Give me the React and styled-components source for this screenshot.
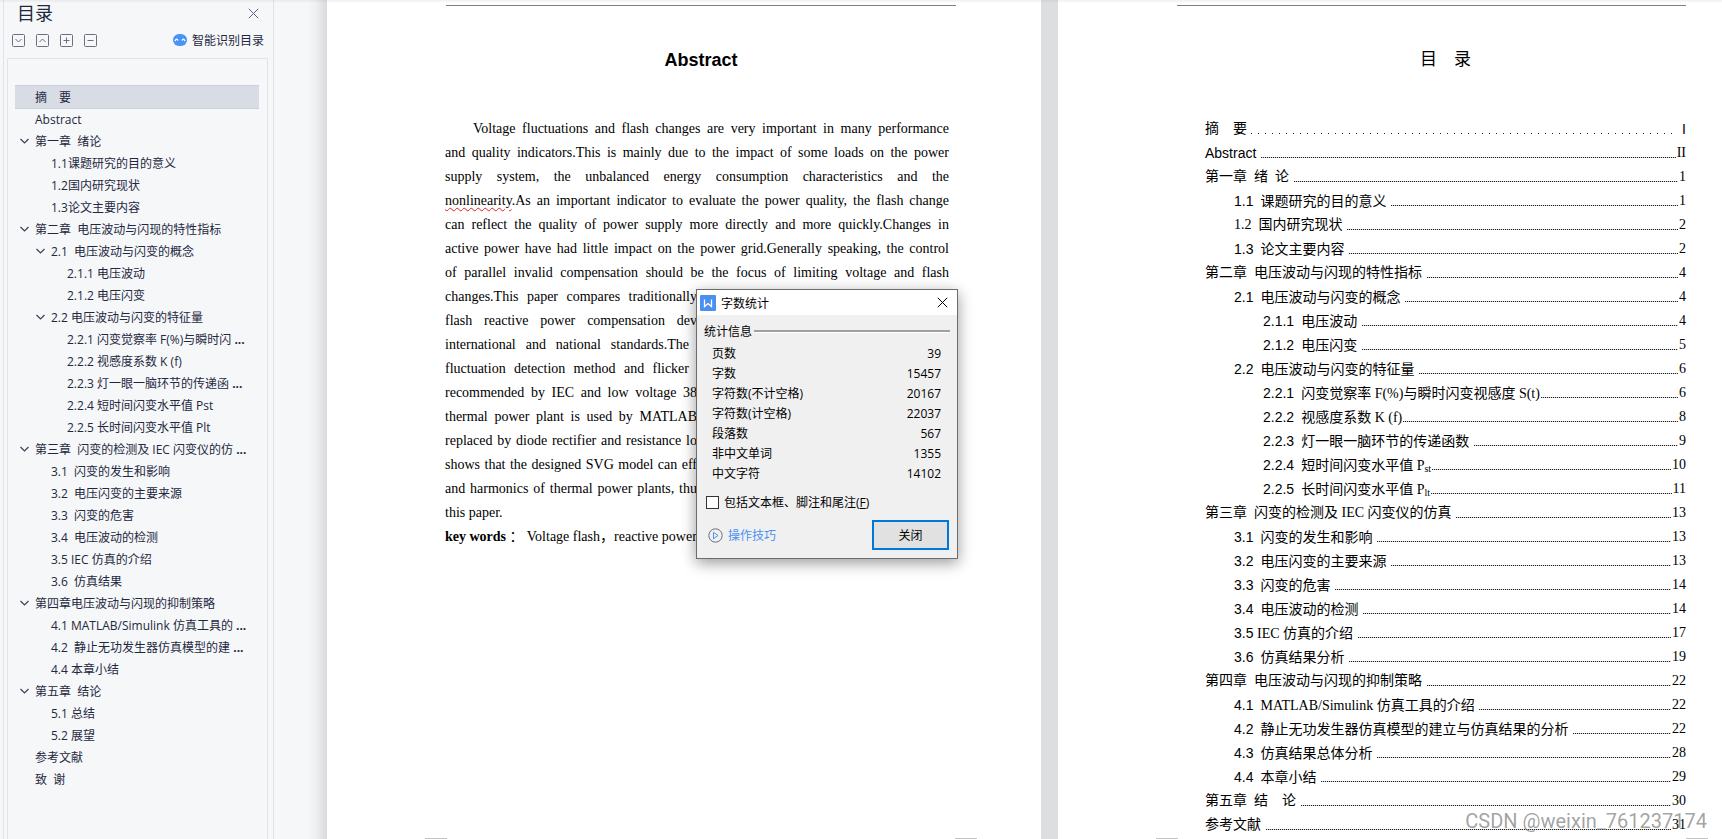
import React from "react";
import styled, { createGlobalStyle } from "styled-components";

const sans = `"Open Sans", "Noto Sans CJK SC", sans-serif`;
const serif = `"Liberation Serif", "Noto Sans CJK SC", serif`;
const arial = `"Liberation Sans", "Noto Sans CJK SC", sans-serif`;

const Global = createGlobalStyle`
  * { box-sizing: border-box; }
  body { margin: 0; background: #dcdee0; }
  button, input { font: inherit; }
`;

const Workspace = styled.div`
  display: grid;
  grid-template-columns: 274px 53px minmax(0, 731fr) minmax(0, 664fr);
  height: 100vh;
  overflow: hidden;
  background: #dcdee0;
  font-family: ${sans};
  font-size: 12px;
  color: #1f2840;
  position: relative;
  &::before {
    content: "";
    position: absolute;
    inset: 0 0 auto 0;
    height: 3px;
    background: linear-gradient(rgba(0, 0, 0, 0.06), transparent);
    z-index: 2;
  }
`;

const SidebarEdge = styled.div`
  display: flex;
  padding-left: 3px;
  background: #f5f7f9;
`;

const Sidebar = styled.aside`
  flex: 1;
  padding: 0 5px 0 3px;
  display: flex;
  flex-direction: column;
  border-left: 1px solid #e1e3e7;
  border-right: 1px solid #e1e3e7;
`;

const Gutter = styled.div`
  background: linear-gradient(90deg, #f5f7f9 34px, #eeeff1 42px, #d9dadc 53px);
`;

const PaneHeader = styled.header`
  display: flex;
  justify-content: space-between;
  align-items: center;
  height: 26px;
  padding: 0 9px 0 10px;
  color: #1f2840;
`;

const PaneTitle = styled.h1`
  margin: 0;
  font-size: 18px;
  font-weight: 400;
  line-height: 26px;
`;

const IconButton = styled.button`
  display: flex;
  padding: 0;
  border: 0;
  background: none;
  color: ${(p) => p.$color || "inherit"};
`;

const Toolbar = styled.div`
  display: flex;
  align-items: center;
  gap: 11px;
  height: 28px;
  margin-bottom: 4px;
  padding: 0 4px 0 5px;
`;

const SmartButton = styled.button`
  display: flex;
  align-items: center;
  gap: 5px;
  margin-left: auto;
  padding: 0;
  border: 0;
  background: none;
  color: #1f2840;
`;

const TreeBox = styled.nav`
  flex: 1;
  padding: 27px 8px 0 7px;
  border: 1px solid #e1e3e7;
  border-bottom: 0;
  border-radius: 2px 2px 0 0;
`;

const TreeItem = styled.a`
  display: flex;
  align-items: center;
  height: 22px;
  padding-left: ${(p) => 4 + p.$level * 16}px;
  color: #1f2840;
  text-decoration: none;
  white-space: pre;
  ${(p) => p.$active && "background: #d8dce4; box-shadow: 0 1px #cbd1dc, 0 -1px #cbd1dc;"}
`;

const Twisty = styled.span`
  display: flex;
  flex: 0 0 16px;
`;

const Sheet = styled.article`
  margin-right: ${(p) => p.$gap}px;
  padding: 5px ${(p) => p.$right}px 0 119px;
  background: #fff;
  color: #000;
  display: flex;
  flex-direction: column;
  position: relative;
`;

const HeaderRule = styled.hr`
  width: 100%;
  height: 1px;
  margin: 0;
  border: 0;
  background: #808080;
`;

const SheetTitle = styled.h2`
  margin: 40px 0 43px;
  padding-left: ${(p) => p.$indent}px;
  font-family: ${arial};
  font-size: ${(p) => p.$size}px;
  line-height: 28px;
  font-weight: ${(p) => p.$weight};
  text-align: center;
  white-space: pre;
`;

const Prose = styled.div`
  padding-right: 7px;
  margin-left: -1px;
  font-family: ${serif};
  font-size: 14px;
  line-height: 24px;
`;

const ProseLine = styled.p`
  margin: 0;
  width: ${(p) => (p.$width ? `${p.$width}px` : "auto")};
  padding-left: ${(p) => (p.$indent ? 28 : 0)}px;
  height: 24px;
  white-space: nowrap;
  text-align: left;
  text-align-last: ${(p) => (p.$loose ? "left" : "justify")};
`;

const Misspelt = styled.span`
  text-decoration: underline wavy #e02020 1px;
  text-underline-offset: 2px;
`;

const Contents = styled.nav`
  padding-left: 28px;
  font-family: ${serif};
  font-size: 14px;
  line-height: 24px;
`;

const ContentsRow = styled.a`
  display: flex;
  height: 24px;
  padding-left: ${(p) => p.$level * 29}px;
  color: #000;
  text-decoration: none;
  white-space: pre;
  sub {
    font-size: 10px;
    line-height: 1px;
    vertical-align: -2px;
  }
`;

const Numeral = styled.span`
  font-family: ${arial};
`;

const Leader = styled.span`
  flex: 1;
  height: 1px;
  margin: 16px 1px 0 1px;
  background: repeating-linear-gradient(90deg, #222 0 1px, #ccc 1px 2px);
`;

const WideLeader = styled.span`
  flex: 1;
  height: 1px;
  margin: 16px 10px 0 4px;
  background: repeating-linear-gradient(90deg, #222 0 1px, transparent 1px 7px);
`;

const CropMark = styled.span`
  position: absolute;
  bottom: 0;
  ${(p) => p.$side}: ${(p) => p.$at}px;
  width: 22px;
  height: 1px;
  background: #c4c4c4;
`;

const Dialog = styled.section`
  position: absolute;
  top: 289px;
  left: 369px;
  width: 262px;
  border: 1px solid #6c6c6c;
  background: #f0f0f0;
  color: #000;
  box-shadow: 0 4px 14px rgba(0, 0, 0, 0.4);
`;

const DialogBar = styled.header`
  display: flex;
  align-items: center;
  gap: 5px;
  height: 25px;
  padding: 0 9px 0 3px;
  background: #fff;
  h3 {
    flex: 1;
    margin: 0;
    font-size: 12px;
    font-weight: 400;
  }
`;

const Group = styled.div`
  display: flex;
  align-items: center;
  gap: 2px;
  height: 18px;
  margin: 7px 7px 4px;
  &::after {
    content: "";
    flex: 1;
    height: 2px;
    background: #a0a0a0;
    border-bottom: 1px solid #fff;
  }
`;

const Stats = styled.table`
  width: 100%;
  border-collapse: collapse;
  th, td {
    height: 20px;
    padding: 0 16px 0 15px;
    font-weight: 400;
    line-height: 20px;
    text-align: left;
  }
  td { text-align: right; }
`;

const CheckLabel = styled.label`
  display: flex;
  align-items: center;
  gap: 5px;
  height: 20px;
  margin: 8px 0 0 9px;
  input {
    appearance: none;
    width: 13px;
    height: 13px;
    margin: 0;
    border: 1px solid #333;
    background: #fff;
  }
`;

const DialogFoot = styled.footer`
  display: flex;
  justify-content: space-between;
  align-items: center;
  padding: 8px;
  padding-left: 11px;
`;

const TipsLink = styled.a`
  display: flex;
  align-items: center;
  gap: 5px;
  color: #4a90f0;
  text-decoration: none;
`;

const PrimaryButton = styled.button`
  width: 77px;
  height: 30px;
  padding: 0;
  border: 2px solid #0078d7;
  background: #e1e1e1;
  color: #000;
`;

const Watermark = styled.div`
  position: absolute;
  right: 15px;
  bottom: 5px;
  font-family: Roboto, sans-serif;
  font-size: 20px;
  line-height: 26px;
  color: rgba(110, 110, 110, 0.65);
`;

const BoxIcon = ({ d }) => (
  <svg width="13" height="13" viewBox="0 0 13 13" fill="none" stroke="#6b7080">
    <rect x="0.5" y="0.5" width="12" height="12" rx="1" />
    <path d={d} />
  </svg>
);

const Chevron = () => (
  <svg width="11" height="8" viewBox="0 0 11 8" fill="none" stroke="#3a4256" strokeWidth="1.2">
    <path d="M1.5 2L5.5 6L9.5 2" />
  </svg>
);

const Cross = ({ size }) => (
  <svg width={size} height={size} viewBox="0 0 11 11" fill="none" stroke="currentColor">
    <path d="M0.8 0.8L10.2 10.2M10.2 0.8L0.8 10.2" />
  </svg>
);

const tools = [
  ["展开", "M3.5 5L6.5 8L9.5 5"],
  ["收起", "M3.5 8L6.5 5L9.5 8"],
  ["全部展开", "M3.5 6.5H9.5M6.5 3.5V9.5"],
  ["全部收起", "M3.5 6.5H9.5"],
];

const outline = [
  { level: 0, text: "摘　要" },
  { level: 0, text: "Abstract" },
  { level: 0, text: "第一章  绪论", open: true },
  { level: 1, text: "1.1课题研究的目的意义" },
  { level: 1, text: "1.2国内研究现状" },
  { level: 1, text: "1.3论文主要内容" },
  { level: 0, text: "第二章  电压波动与闪现的特性指标", open: true },
  { level: 1, text: "2.1  电压波动与闪变的概念", open: true },
  { level: 2, text: "2.1.1 电压波动" },
  { level: 2, text: "2.1.2 电压闪变" },
  { level: 1, text: "2.2 电压波动与闪变的特征量", open: true },
  { level: 2, text: "2.2.1 闪变觉察率 F(%)与瞬时闪", cut: true },
  { level: 2, text: "2.2.2 视感度系数 K (f)" },
  { level: 2, text: "2.2.3 灯一眼一脑环节的传递函", cut: true },
  { level: 2, text: "2.2.4 短时间闪变水平值 Pst" },
  { level: 2, text: "2.2.5 长时间闪变水平值 Plt" },
  { level: 0, text: "第三章  闪变的检测及 IEC 闪变仪的仿", open: true, cut: true },
  { level: 1, text: "3.1  闪变的发生和影响" },
  { level: 1, text: "3.2  电压闪变的主要来源" },
  { level: 1, text: "3.3  闪变的危害" },
  { level: 1, text: "3.4  电压波动的检测" },
  { level: 1, text: "3.5 IEC 仿真的介绍" },
  { level: 1, text: "3.6  仿真结果" },
  { level: 0, text: "第四章电压波动与闪现的抑制策略", open: true },
  { level: 1, text: "4.1 MATLAB/Simulink 仿真工具的", cut: true },
  { level: 1, text: "4.2  静止无功发生器仿真模型的建", cut: true },
  { level: 1, text: "4.4 本章小结" },
  { level: 0, text: "第五章  结论", open: true },
  { level: 1, text: "5.1 总结" },
  { level: 1, text: "5.2 展望" },
  { level: 0, text: "参考文献" },
  { level: 0, text: "致  谢" },
];

/* Lines that run up to the dialog carry the width of their uncovered part. */
const prose = [
  { text: "Voltage fluctuations and flash changes are very important in many performance", indent: true },
  { text: "and quality indicators.This is mainly due to the impact of some loads on the power" },
  { text: "supply system, the unbalanced energy consumption characteristics and the" },
  {
    text: (
      <>
        <Misspelt>nonlinearity</Misspelt>.As an important indicator to evaluate the power quality,
        the flash change
      </>
    ),
  },
  { text: "can reflect the quality of power supply more directly and more quickly.Changes in" },
  { text: "active power have had little impact on the power grid.Generally speaking, the control" },
  { text: "of parallel invalid compensation should be the focus of limiting voltage and flash" },
  { text: "changes.This paper compares traditionally", width: 252 },
  { text: "flash reactive power compensation dev", width: 252 },
  { text: "international and national standards.The", width: 244 },
  { text: "fluctuation detection method and flicker", width: 244 },
  { text: "recommended by IEC and low voltage 38", width: 252 },
  { text: "thermal power plant is used by MATLAB", width: 252 },
  { text: "replaced by diode rectifier and resistance lo", width: 252 },
  { text: "shows that the designed SVG model can eff", width: 252 },
  { text: "and harmonics of thermal power plants, thu", width: 252 },
  { text: "this paper.", loose: true },
  { text: <><b>key words</b> ： Voltage flash，reactive power</>, loose: true },
];

const contents = [
  [0, "", "第一章  绪  论 ", "1"],
  [1, "1.1", "  课题研究的目的意义 ", "1"],
  [1, "", "1.2  国内研究现状 ", "2"],
  [1, "1.3", "  论文主要内容 ", "2"],
  [0, "", "第二章  电压波动与闪现的特性指标 ", "4"],
  [1, "2.1", "  电压波动与闪变的概念 ", "4"],
  [2, "2.1.1", "  电压波动 ", "4"],
  [2, "2.1.2", "  电压闪变 ", "5"],
  [1, "2.2", "  电压波动与闪变的特征量 ", "6"],
  [2, "2.2.1", "  闪变觉察率 F(%)与瞬时闪变视感度 S(t)", "6"],
  [2, "2.2.2", "  视感度系数 K (f)", "8"],
  [2, "2.2.3", "  灯一眼一脑环节的传递函数 ", "9"],
  [2, "2.2.4", <>{"  短时间闪变水平值 P"}<sub>st</sub></>, "10"],
  [2, "2.2.5", <>{"  长时间闪变水平值 P"}<sub>lt</sub></>, "11"],
  [0, "", "第三章  闪变的检测及 IEC 闪变仪的仿真 ", "13"],
  [1, "3.1", "  闪变的发生和影响 ", "13"],
  [1, "3.2", "  电压闪变的主要来源 ", "13"],
  [1, "3.3", "  闪变的危害 ", "14"],
  [1, "3.4", "  电压波动的检测 ", "14"],
  [1, "3.5", " IEC 仿真的介绍 ", "17"],
  [1, "3.6", "  仿真结果分析 ", "19"],
  [0, "", "第四章  电压波动与闪现的抑制策略 ", "22"],
  [1, "4.1", "  MATLAB/Simulink 仿真工具的介绍 ", "22"],
  [1, "4.2", "  静止无功发生器仿真模型的建立与仿真结果的分析 ", "22"],
  [1, "4.3", "  仿真结果总体分析 ", "28"],
  [1, "4.4", "  本章小结 ", "29"],
  [0, "", "第五章  结　论 ", "30"],
  [0, "", "参考文献 ", "31"],
];

const stats = [
  ["页数", "39"],
  ["字数", "15457"],
  ["字符数(不计空格)", "20167"],
  ["字符数(计空格)", "22037"],
  ["段落数", "567"],
  ["非中文单词", "1355"],
  ["中文字符", "14102"],
];

const Outline = () => (
  <Sidebar>
    <PaneHeader>
      <PaneTitle>目录</PaneTitle>
      <IconButton aria-label="关闭目录" $color="#5f6680"><Cross size={11} /></IconButton>
    </PaneHeader>
    <Toolbar>
      {tools.map(([label, d]) => (
        <IconButton key={label} aria-label={label}><BoxIcon d={d} /></IconButton>
      ))}
      <SmartButton>
        <svg width="14" height="12" viewBox="0 0 14 12">
          <rect width="14" height="12" rx="6" fill="#4a94f7" />
          <path d="M2 7Q3.5 3.5 5 6.5M9 6.5Q10.5 3.5 12 7" fill="none" stroke="#fff" strokeWidth="1.4" />
        </svg>
        智能识别目录
      </SmartButton>
    </Toolbar>
    <TreeBox aria-label="目录">
      {outline.map(({ level, text, open, cut }, i) => (
        <TreeItem key={text} href={`#item-${i}`} $level={level} $active={i === 0}>
          <Twisty>{open && <Chevron />}</Twisty>
          <span>{text}{cut && <b> ...</b>}</span>
        </TreeItem>
      ))}
    </TreeBox>
  </Sidebar>
);

const WordCount = () => (
  <Dialog role="dialog" aria-label="字数统计">
    <DialogBar>
      <svg width="16" height="16" viewBox="0 0 16 16">
        <rect width="16" height="16" rx="1" fill="#4a90f0" />
        <path d="M4.5 4.5V11.5L8 8.5L11.5 11.5V4.5" fill="none" stroke="#fff" strokeWidth="1.3" />
      </svg>
      <h3>字数统计</h3>
      <IconButton aria-label="关闭"><Cross size={11} /></IconButton>
    </DialogBar>
    <Group>统计信息</Group>
    <Stats>
      <tbody>
        {stats.map(([name, value]) => (
          <tr key={name}><th scope="row">{name}</th><td>{value}</td></tr>
        ))}
      </tbody>
    </Stats>
    <CheckLabel>
      <input type="checkbox" />
      <span>包括文本框、脚注和尾注(<u>F</u>)</span>
    </CheckLabel>
    <DialogFoot>
      <TipsLink href="#tips">
        <svg width="15" height="15" viewBox="0 0 15 15" fill="none">
          <circle cx="7.5" cy="7.5" r="6.7" stroke="#6b7080" />
          <path d="M5.5 4.3V10.7L10 7.5Z" stroke="#4a90f0" />
        </svg>
        操作技巧
      </TipsLink>
      <PrimaryButton>关闭</PrimaryButton>
    </DialogFoot>
  </Dialog>
);

export default function App() {
  return (
    <Workspace>
      <Global />
      <SidebarEdge><Outline /></SidebarEdge>
      <Gutter />
      <Sheet $gap={17} $right={85}>
        <HeaderRule />
        <SheetTitle $weight={700} $size={18} $indent={0}>Abstract</SheetTitle>
        <Prose>
          {prose.map(({ text, indent, width, loose }, i) => (
            <ProseLine key={i} $indent={indent} $width={width} $loose={loose}>{text}</ProseLine>
          ))}
        </Prose>
        <CropMark $side="left" $at={98} />
        <CropMark $side="right" $at={64} />
        <WordCount />
      </Sheet>
      <Sheet $gap={0} $right={36}>
        <HeaderRule />
        <SheetTitle $weight={400} $size={17} $indent={28}>目　录</SheetTitle>
        <Contents>
          <ContentsRow href="#toc-abstract-zh" $level={0}>
            摘　要<WideLeader /><Numeral>I</Numeral>
          </ContentsRow>
          <ContentsRow href="#toc-abstract" $level={0}>
            <Numeral>Abstract </Numeral><Leader />II
          </ContentsRow>
          {contents.map(([level, number, text, page], i) => (
            <ContentsRow key={i} href={`#toc-${i}`} $level={level}>
              <span>{number && <Numeral>{number}</Numeral>}{text}</span>
              <Leader />
              {page}
            </ContentsRow>
          ))}
        </Contents>
        <CropMark $side="left" $at={98} />
        <CropMark $side="right" $at={14} />
        <Watermark>CSDN @weixin_761237174</Watermark>
      </Sheet>
    </Workspace>
  );
}
